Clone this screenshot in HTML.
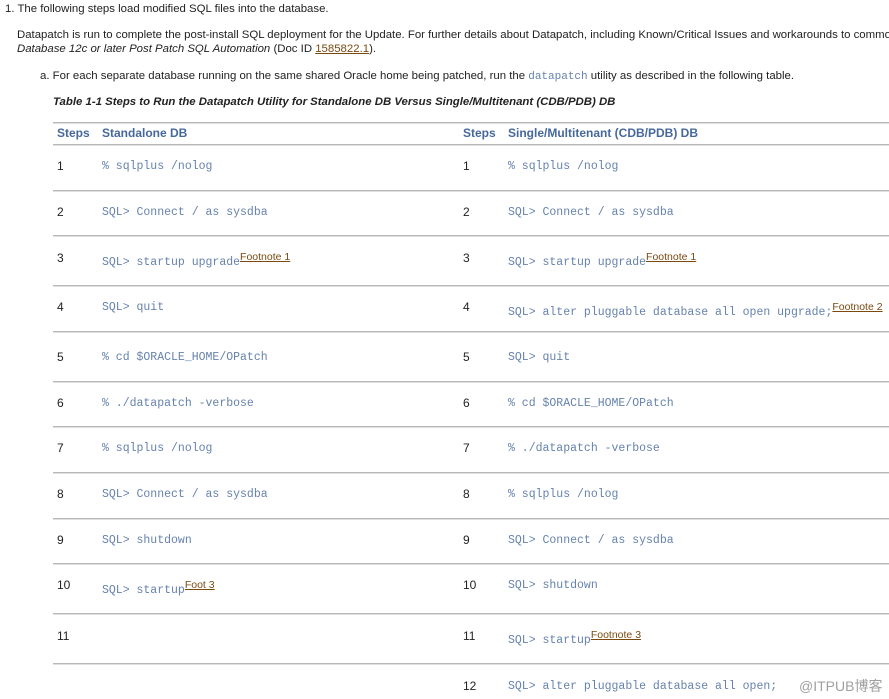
<!DOCTYPE html>
<html><head><meta charset="utf-8"><style>
html,body{margin:0;width:889px;height:699px;overflow:hidden}
body{background:#fff;font-family:"Liberation Sans",Arial,sans-serif;color:#222;font-size:11.4px;position:relative}
#w{position:absolute;left:0;top:0;width:889px;height:699px;overflow:hidden}
.a{position:absolute;white-space:nowrap}
.n{font-size:12px}
.c{font-family:"Liberation Mono","Courier New",monospace;font-size:11.5px;color:#6682ad}
.h{color:#46689c;font-weight:bold;font-size:12px}
.l{position:absolute;left:53px;width:836px;height:1px;background:#b8b8b8;border-bottom:1px solid #e0e0e0}
.f{font-size:10.5px;color:#7a4a10;text-decoration:underline;position:relative;top:-5px;font-family:"Liberation Sans",sans-serif}
u{color:#7a4a10}
</style></head><body><div id="w">
<div class="a" style="left:5px;top:3px">1. The following steps load modified SQL files into the database.</div>
<div class="a" style="left:17px;top:29px">Datapatch is run to complete the post-install SQL deployment for the Update. For further details about Datapatch, including Known/Critical Issues and workarounds to common</div>
<div class="a" style="left:17px;top:43px"><i>Database 12c or later Post Patch SQL Automation</i> (Doc ID <u>1585822.1</u>).</div>
<div class="a" style="left:40px;top:70px">a. For each separate database running on the same shared Oracle home being patched, run the <span class="c" style="font-size:11px">datapatch</span> utility as described in the following table.</div>
<div class="a" style="left:53px;top:96px;font-weight:bold;font-style:italic">Table 1-1 Steps to Run the Datapatch Utility for Standalone DB Versus Single/Multitenant (CDB/PDB) DB</div>
<div class="l" style="top:122px"></div>
<div class="l" style="top:144px"></div>
<div class="a h" style="left:57px;top:126px">Steps</div>
<div class="a h" style="left:102px;top:126px">Standalone DB</div>
<div class="a h" style="left:463px;top:126px">Steps</div>
<div class="a h" style="left:508px;top:126px">Single/Multitenant (CDB/PDB) DB</div>

<div class="l" style="top:190px"></div><div class="l" style="top:235px"></div><div class="l" style="top:285px"></div><div class="l" style="top:331px"></div><div class="l" style="top:381px"></div><div class="l" style="top:426px"></div><div class="l" style="top:472px"></div><div class="l" style="top:518px"></div><div class="l" style="top:563px"></div><div class="l" style="top:613px"></div><div class="l" style="top:663px"></div>

<div class="a n" style="left:57px;top:159px">1</div><div class="a c" style="left:102px;top:160px">% sqlplus /nolog</div>
<div class="a n" style="left:463px;top:159px">1</div><div class="a c" style="left:508px;top:160px">% sqlplus /nolog</div>
<div class="a n" style="left:57px;top:205px">2</div><div class="a c" style="left:102px;top:206px">SQL&gt; Connect / as sysdba</div>
<div class="a n" style="left:463px;top:205px">2</div><div class="a c" style="left:508px;top:206px">SQL&gt; Connect / as sysdba</div>
<div class="a n" style="left:57px;top:251px">3</div><div class="a c" style="left:102px;top:256px">SQL&gt; startup upgrade<span class="f">Footnote 1</span></div>
<div class="a n" style="left:463px;top:251px">3</div><div class="a c" style="left:508px;top:256px">SQL&gt; startup upgrade<span class="f">Footnote 1</span></div>
<div class="a n" style="left:57px;top:300px">4</div><div class="a c" style="left:102px;top:301px">SQL&gt; quit</div>
<div class="a n" style="left:463px;top:300px">4</div><div class="a c" style="left:508px;top:306px">SQL&gt; alter pluggable database all open upgrade;<span class="f">Footnote 2</span></div>
<div class="a n" style="left:57px;top:350px">5</div><div class="a c" style="left:102px;top:351px">% cd $ORACLE_HOME/OPatch</div>
<div class="a n" style="left:463px;top:350px">5</div><div class="a c" style="left:508px;top:351px">SQL&gt; quit</div>
<div class="a n" style="left:57px;top:396px">6</div><div class="a c" style="left:102px;top:397px">% ./datapatch -verbose</div>
<div class="a n" style="left:463px;top:396px">6</div><div class="a c" style="left:508px;top:397px">% cd $ORACLE_HOME/OPatch</div>
<div class="a n" style="left:57px;top:441px">7</div><div class="a c" style="left:102px;top:442px">% sqlplus /nolog</div>
<div class="a n" style="left:463px;top:441px">7</div><div class="a c" style="left:508px;top:442px">% ./datapatch -verbose</div>
<div class="a n" style="left:57px;top:487px">8</div><div class="a c" style="left:102px;top:488px">SQL&gt; Connect / as sysdba</div>
<div class="a n" style="left:463px;top:487px">8</div><div class="a c" style="left:508px;top:488px">% sqlplus /nolog</div>
<div class="a n" style="left:57px;top:533px">9</div><div class="a c" style="left:102px;top:534px">SQL&gt; shutdown</div>
<div class="a n" style="left:463px;top:533px">9</div><div class="a c" style="left:508px;top:534px">SQL&gt; Connect / as sysdba</div>
<div class="a n" style="left:57px;top:578px">10</div><div class="a c" style="left:102px;top:584px">SQL&gt; startup<span class="f">Foot 3</span></div>
<div class="a n" style="left:463px;top:578px">10</div><div class="a c" style="left:508px;top:579px">SQL&gt; shutdown</div>
<div class="a n" style="left:57px;top:629px">11</div>
<div class="a n" style="left:463px;top:629px">11</div><div class="a c" style="left:508px;top:634px">SQL&gt; startup<span class="f">Footnote 3</span></div>
<div class="a n" style="left:463px;top:679px">12</div><div class="a c" style="left:508px;top:680px">SQL&gt; alter pluggable database all open;</div>
<div class="a" style="left:799px;top:676px;font-size:14px;color:#a0a0a0;font-family:'Liberation Sans','Noto Sans CJK SC',sans-serif">@ITPUB博客</div>
</div></body></html>
